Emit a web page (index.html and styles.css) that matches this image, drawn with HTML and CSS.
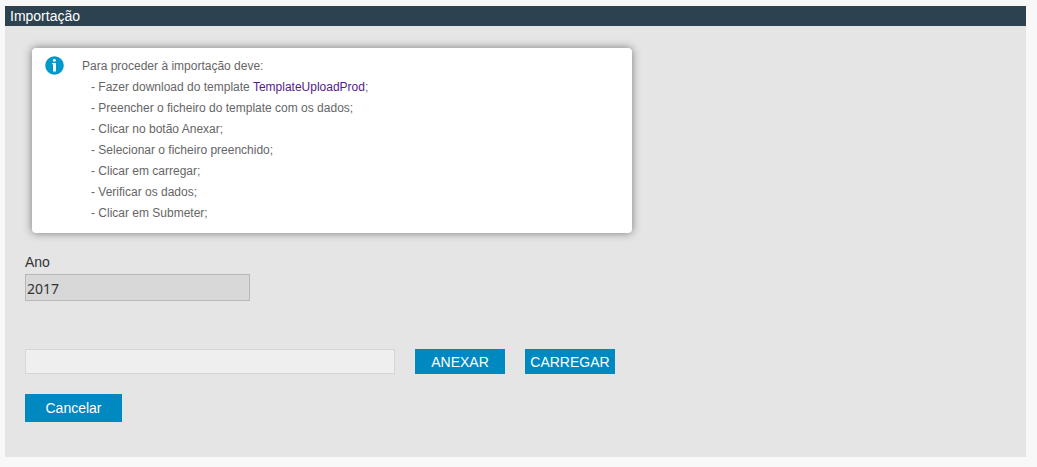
FILE: index.html
```html
<!DOCTYPE html>
<html lang="pt">
<head>
<meta charset="utf-8">
<title>Importação</title>
<link rel="stylesheet" href="styles.css">
</head>
<body>
<main class="panel">
  <h1 class="panel-title">Importação</h1>
  <div class="panel-body">
    <section class="info">
      <svg class="info-icon" viewBox="0 0 19 19" aria-hidden="true">
        <circle cx="9.5" cy="9.5" r="9.3" fill="#0099cc"/>
        <circle cx="9.4" cy="4.3" r="1.5" fill="#fff"/>
        <path d="M7.2 7h3.8v8.6H8V8.3h-.8z" fill="#fff"/>
      </svg>
      <div class="info-text">
        <p>Para proceder à importação deve:</p>
        <ul class="steps">
          <li>- Fazer download do template <a href="#">TemplateUploadProd</a>;</li>
          <li>- Preencher o ficheiro do template com os dados;</li>
          <li>- Clicar no botão Anexar;</li>
          <li>- Selecionar o ficheiro preenchido;</li>
          <li>- Clicar em carregar;</li>
          <li>- Verificar os dados;</li>
          <li>- Clicar em Submeter;</li>
        </ul>
      </div>
    </section>
    <form class="form">
      <label class="label" for="year">Ano</label>
      <input class="year" id="year" type="text" value="2017" readonly>
      <div class="upload">
        <input class="file" type="text" aria-label="Ficheiro" readonly>
        <button class="button" type="button">ANEXAR</button>
        <button class="button" type="button">CARREGAR</button>
      </div>
      <button class="button cancel" type="button">Cancelar</button>
    </form>
  </div>
</main>
</body>
</html>
```
FILE: styles.css
```css
* {
  box-sizing: border-box;
}

body {
  margin: 0;
  padding: 6px 11px 10px 5px;
  background: #f8f8f8;
  color: #333;
  font: 14px/20px "Liberation Sans", Arial, sans-serif;
}

.panel {
  background: #e5e5e5;
}

.panel-title {
  margin: 0;
  padding: 0 5px;
  background: #2c4251;
  color: #fff;
  font-size: 14px;
  font-weight: normal;
}

.panel-body {
  padding: 22px 20px 35px;
}

.info {
  display: flex;
  gap: 18px;
  max-width: 600px;
  margin-left: 7px;
  padding: 8px 13px 9px;
  border-radius: 4px;
  background: #fff;
  box-shadow: 0 0 8px #777;
  color: #666;
  font-size: 12px;
  line-height: 21px;
}

.info-icon {
  flex: none;
  width: 19px;
  height: 19px;
}

.info p {
  margin: 0;
}

.info a {
  color: #551a8b;
  text-decoration: none;
}

.steps {
  margin: 0;
  padding: 0 0 0 9px;
  list-style: none;
}

.form {
  display: flex;
  flex-direction: column;
  align-items: flex-start;
  margin-top: 19px;
}

.label {
  margin-bottom: 2px;
}

.year,
.file {
  margin: 0;
  padding: 2px 1px 0;
  border: 1px solid #b8b8b8;
  background: #d8d8d8;
  color: #333;
  font: 14px "Noto Sans", sans-serif;
}

.year {
  width: 225px;
  height: 27px;
}

.upload {
  display: flex;
  gap: 20px;
  margin: 48px 0 20px;
}

.file {
  width: 370px;
  height: 25px;
  border-color: #d5d5d5;
  background: #efefef;
}

.button {
  min-width: 90px;
  height: 25px;
  padding: 0 5px;
  border: 0;
  background: #0088c0;
  color: #fff;
  font: 14px "Liberation Sans", Arial, sans-serif;
}

.cancel {
  min-width: 97px;
  height: 28px;
}
```
